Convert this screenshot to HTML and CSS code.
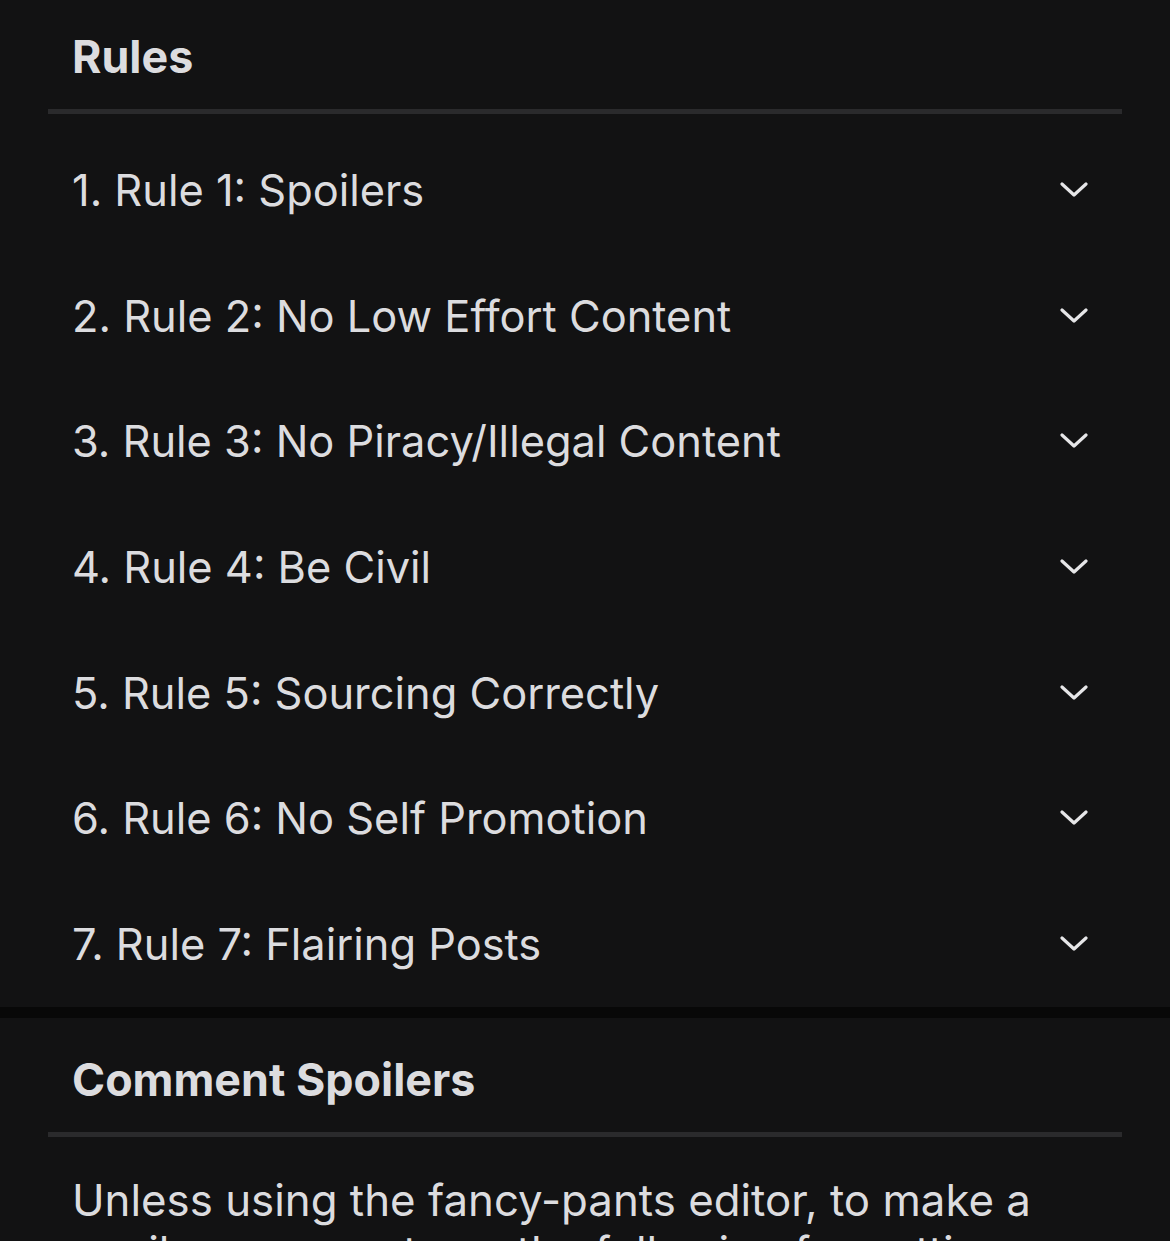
FILE: index.html
```html
<!DOCTYPE html>
<html lang="en">
<head>
  <meta charset="UTF-8">
  <meta name="viewport" content="width=device-width, initial-scale=1.0">
  <title>Community Rules</title>
  <link rel="stylesheet" href="styles.css">
</head>
<body>

<!-- Rules card -->
<section class="card">
  <h2 class="card-title">Rules</h2>
  <ul class="rules">
    <li class="rule"><span>1. Rule 1: Spoilers</span><svg class="chevron" viewBox="0 0 28 16"><path d="M2 2 L14 13 L26 2"/></svg></li>
    <li class="rule"><span>2. Rule 2: No Low Effort Content</span><svg class="chevron" viewBox="0 0 28 16"><path d="M2 2 L14 13 L26 2"/></svg></li>
    <li class="rule"><span>3. Rule 3: No Piracy/Illegal Content</span><svg class="chevron" viewBox="0 0 28 16"><path d="M2 2 L14 13 L26 2"/></svg></li>
    <li class="rule"><span>4. Rule 4: Be Civil</span><svg class="chevron" viewBox="0 0 28 16"><path d="M2 2 L14 13 L26 2"/></svg></li>
    <li class="rule"><span>5. Rule 5: Sourcing Correctly</span><svg class="chevron" viewBox="0 0 28 16"><path d="M2 2 L14 13 L26 2"/></svg></li>
    <li class="rule"><span>6. Rule 6: No Self Promotion</span><svg class="chevron" viewBox="0 0 28 16"><path d="M2 2 L14 13 L26 2"/></svg></li>
    <li class="rule"><span>7. Rule 7: Flairing Posts</span><svg class="chevron" viewBox="0 0 28 16"><path d="M2 2 L14 13 L26 2"/></svg></li>
  </ul>
</section>

<!-- Comment spoilers card -->
<section class="card card-text">
  <h2 class="card-title">Comment Spoilers</h2>
  <p class="body-text">Unless using the fancy-pants editor, to make a spoiler comment use the following formatting:</p>
</section>

</body>
</html>
```

FILE: styles.css
```css
body {
  margin: 0;
  background: #080808;
  font-family: Inter, "Noto Sans", sans-serif;
  color: #dcdcdf;
  overflow: hidden;
}

.card {
  background: #121213;
  padding: 0 48px;
}

.card + .card {
  margin-top: 11px;
}

.card-title {
  margin: 0;
  height: 114px;
  box-sizing: border-box;
  padding: 30px 24px 0;
  font-size: 44.8px;
  line-height: 54px;
  font-weight: 700;
  border-bottom: 5px solid #2a2a2c;
}

.card-text .card-title {
  height: 119px;
  padding-top: 35px;
}

.rules {
  list-style: none;
  margin: 0;
  padding: 13px 0 0;
}

.rule {
  display: flex;
  align-items: center;
  justify-content: space-between;
  height: 125.7px;
  padding: 0 34px 0 24px;
  font-size: 43.4px;
}

.chevron {
  width: 28px;
  height: 16px;
  fill: none;
  stroke: #e6e6e8;
  stroke-width: 3.2;
  stroke-linecap: round;
  stroke-linejoin: round;
}

.body-text {
  margin: 0;
  padding: 38px 24px 0;
  font-size: 43.8px;
  line-height: 52px;
}
```
